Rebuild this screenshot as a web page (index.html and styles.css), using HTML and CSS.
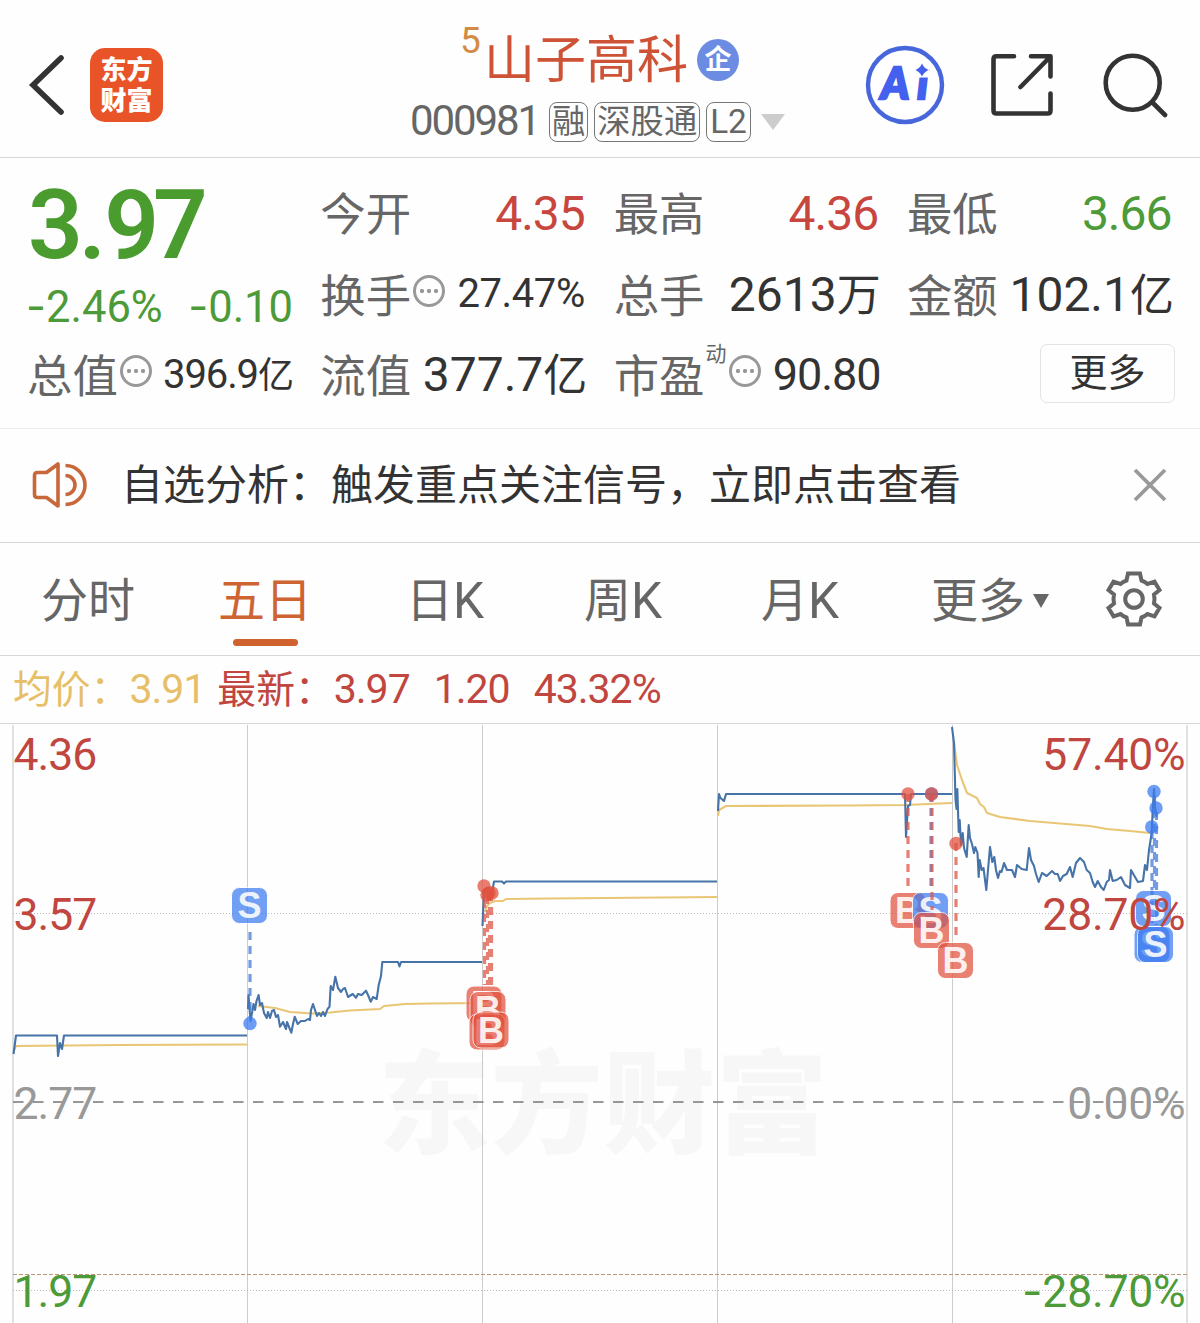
FILE: index.html
```html
<!DOCTYPE html>
<html lang="zh-CN">
<head>
<meta charset="utf-8">
<title>山子高科 000981</title>
<link rel="stylesheet" href="styles.css">
</head>
<body>
<header class="header">
  <div class="header-left">
    <svg class="back" width="36" height="60" viewBox="0 0 36 60"><path d="M33 3 5 30 33 57" fill="none" stroke="#333" stroke-width="5.6" stroke-linecap="round"/></svg>
    <div class="logo"><span>东方</span><span>财富</span></div>
  </div>
  <div class="title">
    <div class="title-name"><sup class="level">5</sup><h1>山子高科</h1><span class="badge">企</span></div>
    <div class="title-code"><span class="code">000981</span><span class="tag">融</span><span class="tag">深股通</span><span class="tag tag-l2">L2</span><i class="caret"></i></div>
  </div>
  <div class="header-right">
    <svg width="80" height="80" viewBox="865 45 80 80">
      <circle cx="905" cy="85" r="37" fill="#fff" stroke="#4766dc" stroke-width="4.4"/>
      <text class="ai" x="881" y="98.5" textLength="47">Ai</text>
      <rect x="913" y="62" width="16.5" height="15.500" fill="#fff"/>
      <path d="M922 63.5Q924 68 928.500 70Q924 72 922 76.500Q920 72 915.500 70Q920 68 922 63.500Z" fill="#4361ee"/>
    </svg>
    <svg width="64" height="64" viewBox="990 53 64 64" fill="none" stroke="#333" stroke-width="4.600" stroke-linecap="round" stroke-linejoin="round"><path d="M1014 56.300H996.500Q993.500 56.300 993.500 59.300V110.500Q993.500 113.500 996.500 113.500H1047.500Q1050.500 113.500 1050.500 110.500V93.500M1031 56.300H1050.500V76.500M1020.500 87 1050 57"/></svg>
    <svg width="66" height="66" viewBox="1102 51 66 66" fill="none" stroke="#333" stroke-width="4.600" stroke-linecap="round"><circle cx="1132.700" cy="81.700" r="27"/><path d="M1153 102 1165 114"/></svg>
  </div>
</header>

<section class="quote">
  <div class="price">
    <strong>3<span class="point">.</span>97</strong>
    <p class="change"><span><b>-</b>2.46%</span><span><b>-</b>0.10</span></p>
  </div>
  <div class="cell"><label>今开</label><span class="num red">4.35</span></div>
  <div class="cell"><label>最高</label><span class="num red">4.36</span></div>
  <div class="cell"><label>最低</label><span class="num green">3.66</span></div>
  <div class="cell"><label>换手</label><i class="more-dot"></i><span class="num small">27.47%</span></div>
  <div class="cell"><label>总手</label><span class="num unit">2613<em>万</em></span></div>
  <div class="cell"><label>金额</label><span class="num unit">102.1<em>亿</em></span></div>
  <div class="cell"><label>总值</label><i class="more-dot"></i><span class="num unit small">396.9<em>亿</em></span></div>
  <div class="cell"><label>流值</label><span class="num unit">377.7<em>亿</em></span></div>
  <div class="cell"><label>市盈</label><sup class="dyn">动</sup><i class="more-dot"></i><span class="num medium">90.80</span></div>
  <div class="cell cell-more"><button class="more">更多</button></div>
</section>

<section class="notice">
  <svg width="56" height="48" viewBox="32 461 56 48" fill="none" stroke="#c8683a" stroke-width="3.600" stroke-linejoin="round"><path d="M58 464V506L46.500 497.500H37.500Q34.500 497.500 34.500 494.500V475.500Q34.500 472.500 37.500 472.500H46.500ZM65.500 475.500A9.500 9.500 0 0 1 65.500 494.500M65.500 465.500A19.500 19.500 0 0 1 65.500 504.500"/></svg>
  <p>自选分析：触发重点关注信号，立即点击查看</p>
  <svg width="34" height="34" viewBox="0 0 34 34"><path d="M2 2 32 32M32 2 2 32" stroke="#999" stroke-width="3.800"/></svg>
</section>

<nav class="tabs">
  <a>分时</a>
  <a class="active">五日</a>
  <a>日<b>K</b></a>
  <a>周<b>K</b></a>
  <a>月<b>K</b></a>
  <a>更多<i class="caret-small"></i></a>
  <svg width="60" height="60" viewBox="-30 -30 60 60" fill="none" stroke="#666" stroke-width="4"><path d="M-6-25.500H6L7.500-18.500Q11-17.300 13.500-15L20.500-17.300 25.500-9 20-4.500Q21 0 20 4.500L25.500 9 20.500 17.300 13.500 15Q11 17.300 7.500 18.500L6 25.500H-6L-7.500 18.500Q-11 17.300-13.500 15L-20.500 17.300-25.500 9-20 4.500Q-21 0-20-4.500L-25.500-9-20.500-17.300-13.500-15Q-11-17.300-7.500-18.500Z"/><circle r="8.800"/></svg>
</nav>

<div class="legend">
  <span class="avg">均价：<b>3.91</b></span>
  <span class="last">最新：<b>3.97</b><b>1.20</b><b>43.32%</b></span>
</div>

<svg class="chart" width="1200" height="599" viewBox="0 724 1200 599">
  <defs>
    <g id="b"><rect class="box" x="-18" y="-18" width="36" height="36" rx="8"/><text class="letter" y="12.500">B</text></g>
    <g id="s"><rect class="box" x="-18" y="-18" width="36" height="36" rx="8"/><text class="letter" y="12.500">S</text></g>
  </defs>
  <text class="watermark" x="378" y="1145" textLength="450">东方财富</text>
  <g class="grid">
    <path d="M13 725V1323M1187 725V1323" stroke-width="2"/>
    <path d="M247.500 725V1323M482.500 725V1323M717.500 725V1323M952.500 725V1323" stroke="#ccc"/>
    <path d="M13 913.500H1187M13 1290.500H1187" stroke="#bbb" stroke-dasharray="1 2"/>
    <path d="M13 1274.500H1187" stroke="#bd9577" stroke-dasharray="4 2"/>
    <path d="M13 1102H1187" stroke="#777" stroke-width="1.700" stroke-dasharray="10.500 9.500"/>
  </g>
  <g class="line avg-line">
    <path d="M14 1050 16 1046 120 1045 247 1044.500"/>
    <path d="M258 1006 275 1008 290 1012 312 1013.500 330 1012.500 350 1010.500 380 1009 384 1006 405 1004 430 1003.500 482 1003"/>
    <path d="M485 912 487 906 490 903 495 901 503 901 506 899 550 898.500 717 897"/>
    <path d="M718 816 719 810 726 806 850 805.500 905 805 940 803.500 952 803"/>
    <path d="M954 743 957 765 962 780 967 793 977 798 980 804 984 807 987 813 1000 817 1030 821 1090 826 1107 829 1130 831 1150 833"/>
  </g>
  <g class="line price-line">
    <path d="M13.500 1054 16 1035.500 57 1035.500 58 1056 60 1043 62 1049 64 1035.500 247 1035.500"/>
    <path d="M248 1009 248.500 995 250.500 1021 252 1013 253.500 1004 255 1010 256.500 1001 258.600 995 260 1005 262 1003 264 1013 266.700 1018 268 1012 270 1018 272 1011 274 1010 276 1017 278 1015 280 1026.700 283 1022 286 1029 287 1022 289 1027 291.300 1032.700 293 1024 294.700 1016.700 297.700 1024 301 1021 305 1021 308 1019 310 1020 311 1010 313 1004 315 1010 317 1016 319 1013 321 1016 323 1012 325 1016 327.500 1009 329.500 1006.700 330.700 986 333 990 335.300 976.700 338 988 341 992 343 989 345 988 348 997 352.700 994 356 997.700 358 994 361.700 995 366 990.700 368 995 370.700 1001.700 373 997 376.700 999 378.700 985 381 976 382.300 962 398 962 399.500 966.500 401 962 482 962"/>
    <path d="M482.500 926 484 890 487 888 490 900 493 887 494 881.500 502 881.500 504 883.500 506 881.500 717 881.500"/>
    <path d="M718 811 719 794 720.500 798 724 801 726 794 905 794 906 837 908 806 910 805 911 794 952 794"/>
    <path d="M952 727 954 743 955.500 800 956.500 809 957.300 789 958.700 832 959.700 820 961 845 962.700 833 964 848 966.700 857 968.700 825 970 838 972 844 974 853 975.300 847 977.500 853 978.700 877 979.700 860 981.700 870 983.500 868 986.300 890 988 870 990 847 992.300 862 994.300 857 996 870 998 878 1000 871 1001.500 872 1004 863 1007 870 1012 870 1015 877 1017 865 1021.700 869 1026.700 870 1029 848 1031 860 1034 866 1036 874 1038.700 882 1042 873 1046.700 876 1052 871 1055 874 1057.700 874 1060 881 1063 876 1066.700 874 1070 867 1072.700 877 1076 863 1080 858 1084 862 1086.700 870 1090 873 1092.700 882 1095 887 1097.700 881 1101 887 1103.700 890 1106.700 882 1109 880 1110 870 1112.700 881 1116.700 880 1121 877 1125 885 1130 888 1131 870 1135 877 1138 882 1143 881 1145 865 1147 870 1149 850 1151.700 833 1152.700 810 1154 789 1155 807 1156.700 817"/>
  </g>
  <g class="sell">
    <path d="M250 932V1018"/><circle cx="250" cy="1023.500" r="6.700"/><use href="#s" x="249.500" y="905.500"/>
  </g>
  <g class="buy">
    <path d="M484.500 900V985M487.500 896V985M489.500 893V985M491.500 893V985"/>
    <circle cx="484" cy="886" r="6.700"/><circle cx="487" cy="895" r="6.700"/><circle cx="489" cy="893" r="6.700"/><circle cx="492" cy="893" r="6.700"/>
    <use href="#b" x="484" y="1004"/><use href="#b" x="488" y="1009.500"/><use href="#b" x="487" y="1032"/><use href="#b" x="491" y="1030"/>
    <path d="M908 794V886"/><circle cx="908" cy="794" r="6.700"/><use href="#b" x="908" y="910.500"/>
  </g>
  <g class="sell"><path d="M931 794V886"/><circle cx="931.500" cy="794" r="6.700"/><use href="#s" x="930.500" y="910.500"/></g>
  <g class="buy">
    <path d="M932 794V910"/><circle cx="931.500" cy="794" r="6.700"/><use href="#b" x="931.500" y="930.500"/>
    <path d="M956 843V937"/><circle cx="956" cy="843.500" r="6.700"/><use href="#b" x="955.500" y="960.500"/>
  </g>
  <g class="sell">
    <path d="M1152 831V925M1154.500 796V891M1156.500 812V925"/>
    <circle cx="1154" cy="791.500" r="6.700"/><circle cx="1156" cy="808" r="6.700"/><circle cx="1151.700" cy="827" r="6.700"/>
    <use href="#s" x="1153.500" y="908.500"/><use href="#s" x="1152" y="944.500"/><use href="#s" x="1155.500" y="944.500"/>
  </g>
  <g class="axis">
    <text class="red" x="13.500" y="770">4.36</text>
    <text class="red" x="13.500" y="930">3.57</text>
    <text class="gray" x="13.500" y="1118.500">2.77</text>
    <text class="green" x="13.500" y="1307">1.97</text>
  </g>
  <g class="axis end">
    <text class="red" x="1185.500" y="770">57.40%</text>
    <text class="red" x="1185.500" y="930">28.70%</text>
    <text class="gray" x="1185.500" y="1118.500">0.00%</text>
    <text class="green" x="1185.500" y="1307"><tspan class="minus">-</tspan>28.70%</text>
  </g>
</svg>
</body>
</html>
```
FILE: styles.css
```css
* { box-sizing: border-box; }
body {
  margin: 0;
  width: 1200px;
  height: 1323px;
  overflow: hidden;
  background: #fefefe;
  color: #333;
  font-family: Roboto, "Noto Sans CJK SC", sans-serif;
}
h1, p { margin: 0; font-weight: 400; }
b, em, i { font-weight: 400; font-style: normal; }
svg { display: block; flex: none; }
.red { color: #c8463e; fill: #c0463f; }
.green { color: #4c9a38; fill: #4c9a38; }
.gray { fill: #999; }

.header {
  display: flex;
  height: 158px;
  padding: 0 32px 0 28px;
  border-bottom: 1px solid #d6d6d6;
}
.header-left { display: flex; align-items: center; gap: 26px; width: 340px; margin-top: 13px; }
.logo {
  display: flex;
  flex-direction: column;
  align-items: center;
  width: 73px;
  height: 74px;
  padding-top: 4px;
  border-radius: 15px;
  background: #e95328;
  color: #fff;
  font: 900 26px/31px "Noto Sans CJK SC", sans-serif;
}
.title { width: 430px; padding-top: 21px; white-space: nowrap; }
.title-name { display: flex; align-items: flex-start; height: 78px; padding-left: 92px; }
.level { width: 24px; color: #d18b43; font-size: 37px; line-height: 40px; }
.title h1 { font-size: 51px; line-height: 80px; color: #cd5236; }
.badge {
  width: 42px;
  height: 42px;
  margin: 18px 0 0 9px;
  border-radius: 50%;
  background: #6b8ce2;
  color: #fff;
  font-weight: 700;
  font-size: 27px;
  line-height: 42px;
  text-align: center;
}
.title-code { display: flex; align-items: center; height: 46px; padding-left: 42px; color: #666; }
.code { width: 139px; margin-top: -3px; font-size: 42px; letter-spacing: -2.100px; }
.tag {
  height: 40px;
  margin-right: 6px;
  padding: 0 2px;
  border: 1px solid #777;
  border-radius: 8px;
  font-size: 33.300px;
  line-height: 37px;
}
.tag-l2 { padding: 0 3px; }
.caret { margin-left: 4px; border: 12px solid transparent; border-top: 16px solid #ccc; border-bottom: 0; }
.header-right { display: flex; align-items: center; gap: 46px; margin: 13px 0 0 auto; }
.header-right svg:first-child { margin-right: -1px; }
.header-right svg:last-child { margin-left: 2px; }
.ai { font: italic 900 43px Lato, sans-serif; fill: #4361ee; stroke: #4361ee; stroke-width: 2.500; }

.quote {
  display: grid;
  grid-template-columns: repeat(4, 265px);
  grid-template-rows: 82px 80px 80px;
  justify-content: space-between;
  height: 271px;
  padding: 15px 27px 0 28px;
  border-bottom: 1px solid #ececec;
}
.price { grid-row: span 2; color: #4a9c2f; }
.price strong { display: block; height: 104px; font-size: 96px; font-weight: 600; line-height: 104px; letter-spacing: -6px; }
.point { margin: 0 4px 0 2px; }
.change { display: flex; justify-content: space-between; margin-left: -2px; font-size: 43.500px; line-height: 58px; color: #4c9a38; letter-spacing: 0; }
.change b, .minus { font-family: Inter, sans-serif; }
.cell { display: flex; align-items: center; height: 80px; white-space: nowrap; }
.cell label { margin-left: -1px; padding-top: 5px; font-size: 45.400px; line-height: 75px; color: #666; }
.num { margin: 0 1.500px 0 auto; font-size: 48px; letter-spacing: -1px; }
.num em { font-size: 44px; letter-spacing: 0; }
.num.small { padding-bottom: 4px; font-size: 40px; letter-spacing: -.4px; }
.num.medium { margin-right: -1px; padding-bottom: 2px; font-size: 45px; }
.num.unit { margin-right: -1px; padding-bottom: 6px; letter-spacing: 0; }
.num.small em { font-size: 36px; }
.num.small.unit { letter-spacing: -1.100px; }
.more-dot {
  width: 32px;
  height: 32px;
  margin: -8px 0 0 2px;
  border: 3px solid #999;
  border-radius: 50%;
  background:
    radial-gradient(circle at 6px 13px, #999 1.800px, transparent 2.500px),
    radial-gradient(circle at 13px 13px, #999 1.800px, transparent 2.500px),
    radial-gradient(circle at 20px 13px, #999 1.800px, transparent 2.500px);
}
.dyn { width: 22px; font-size: 21px; line-height: 24px; margin: -42px 0 0 1px; color: #666; }
.cell-more { justify-content: flex-end; }
.more {
  width: 135px;
  height: 59px;
  margin: -4px -2px 0 0;
  padding: 0 0 6px;
  border: 1.500px solid #e3e3e3;
  border-radius: 7px;
  background: none;
  color: #333;
  font: 38px/50px "Noto Sans CJK SC", sans-serif;
}

.notice { display: flex; align-items: center; height: 114px; padding: 0 33px 2px 32px; border-bottom: 1px solid #d6d6d6; }
.notice p { flex: 1; margin: -5px 0 0 33px; font: 42px/60px "Noto Sans CJK SC", sans-serif; }

.tabs {
  display: grid;
  grid-template-columns: 176px 178px 182px 174px 180px 200px 88px;
  align-items: center;
  justify-items: center;
  height: 113px;
  border-bottom: 1px solid #d6d6d6;
  color: #666;
  font-size: 47px;
}
.tabs a { position: relative; display: flex; align-items: center; height: 94px; padding-top: 3px; line-height: 90px; }
.tabs b { font-size: 49.500px; }
.tabs .active { color: #cf6433; }
.tabs .active::after {
  content: "";
  position: absolute;
  left: 50%;
  bottom: 0;
  width: 65px;
  height: 7px;
  margin-left: -32px;
  border-radius: 4px;
  background: #d0622f;
}
.caret-small { margin-left: 8px; border: 8px solid transparent; border-top: 14px solid #666; border-bottom: 0; }

.legend { display: flex; align-items: center; gap: 12px; height: 68px; padding-left: 13px; border-bottom: 1px solid #d6d6d6; font-size: 38.800px; line-height: 64px; }
.legend b { font-size: 41px; letter-spacing: -1px; }
.legend b + b { margin-left: 24px; }
.avg { color: #e6bf68; }
.last { color: #c0463f; }

.grid { stroke: #e0e0e0; fill: none; }
.line { fill: none; stroke-width: 2.100; stroke-linejoin: round; }
.avg-line { stroke: #e9c676; }
.price-line { stroke: #4673a8; }
.watermark { font: 900 112px "Noto Sans CJK SC", sans-serif; fill: #f7f7f7; }
.buy { fill: #e2523f; stroke: #dd5545; }
.sell { fill: #3c7bf0; stroke: #4478d8; }
.buy path, .sell path { fill: none; stroke-width: 3.200; stroke-dasharray: 8 6; opacity: .75; }
.buy circle, .sell circle { stroke: none; opacity: .75; }
.box { stroke: #fff; stroke-width: 1; opacity: .72; }
.letter { font: 700 36px "Liberation Sans", sans-serif; fill: #fff; fill-opacity: .9; stroke: none; text-anchor: middle; }
.axis { font-size: 44.500px; letter-spacing: -1px; }
.end { text-anchor: end; letter-spacing: -.200px; }
```
